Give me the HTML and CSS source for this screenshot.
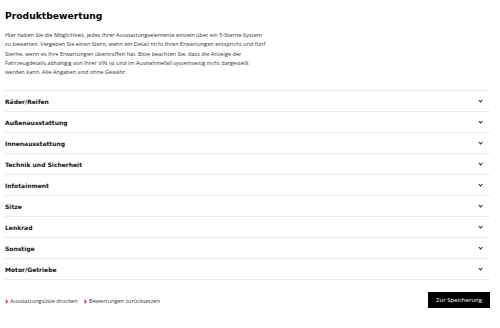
FILE: index.html
```html
<!DOCTYPE html>
<html lang="de">
<head>
    <meta charset="UTF-8">
    <meta name="viewport" content="width=device-width, initial-scale=1.0">
    <title>Produktbewertung</title>
    <link rel="stylesheet" href="styles.css">
</head>
<body>

<div class="container">
    <h1 class="title">Produktbewertung</h1>

    <p class="intro">
        Hier haben Sie die Möglichkeit, jedes Ihrer Ausstattungselemente einzeln über ein 5-Sterne-System
        zu bewerten. Vergeben Sie einen Stern, wenn ein Detail nicht Ihren Erwartungen entspricht und fünf
        Sterne, wenn es Ihre Erwartungen übertroffen hat. Bitte beachten Sie, dass die Anzeige der
        Fahrzeugdetails abhängig von Ihrer VIN ist und im Ausnahmefall systemseitig nicht dargestellt
        werden kann. Alle Angaben sind ohne Gewähr.
    </p>

    <ul class="categories">
        <li class="category"><span>Räder/Reifen</span><span class="chevron"></span></li>
        <li class="category"><span>Außenausstattung</span><span class="chevron"></span></li>
        <li class="category"><span>Innenausstattung</span><span class="chevron"></span></li>
        <li class="category"><span>Technik und Sicherheit</span><span class="chevron"></span></li>
        <li class="category"><span>Infotainment</span><span class="chevron"></span></li>
        <li class="category"><span>Sitze</span><span class="chevron"></span></li>
        <li class="category"><span>Lenkrad</span><span class="chevron"></span></li>
        <li class="category"><span>Sonstige</span><span class="chevron"></span></li>
        <li class="category"><span>Motor/Getriebe</span><span class="chevron"></span></li>
    </ul>

    <div class="footer">
        <div class="links">
            <a href="#" class="link">Ausstattungsliste drucken</a>
            <a href="#" class="link">Bewertungen zurücksetzen</a>
        </div>
        <button class="save-button">Zur Speicherung</button>
    </div>
</div>

</body>
</html>
```

FILE: styles.css
```css
body {
    font-family: "Open Sans", Arial, sans-serif;
    background-color: #fff;
    color: #000;
    margin: 0;
    padding: 0;
}
.container {
    padding: 5px 10px 0 5px;
}
.title {
    font-family: "DejaVu Sans", sans-serif;
    font-size: 9.2px;
    font-weight: bold;
    margin: 0;
    padding-top: 4px;
    line-height: 14px;
}
.intro {
    font-size: 5.6px;
    line-height: 9.3px;
    color: #333;
    margin: 8px 0 0 0;
    max-width: 262px;
}
.categories {
    list-style: none;
    margin: 13px 0 0 0;
    padding: 0;
    border-top: 1px solid #ebebeb;
}
.category {
    display: flex;
    justify-content: space-between;
    align-items: center;
    height: 20px;
    border-bottom: 1px solid #ebebeb;
    font-family: "DejaVu Sans", sans-serif;
    font-size: 6px;
    font-weight: bold;
    color: #111;
}
.chevron {
    width: 2.2px;
    height: 2.2px;
    border-right: 1.2px solid #222;
    border-bottom: 1.2px solid #222;
    transform: rotate(45deg);
    margin-right: 8px;
    margin-top: -2px;
}
.footer {
    display: flex;
    justify-content: space-between;
    align-items: center;
    margin-top: 12px;
}
.links {
    display: flex;
    gap: 6px;
}
.link {
    font-size: 5.6px;
    color: #333;
    text-decoration: none;
}
.link::before {
    content: "›";
    color: #e4002b;
    font-weight: bold;
    font-size: 9px;
    margin-right: 2px;
    vertical-align: -1px;
}
.save-button {
    font-family: "Open Sans", Arial, sans-serif;
    font-size: 6px;
    background-color: #000;
    color: #fff;
    border: none;
    padding: 0 8px;
    height: 16px;
}
```
